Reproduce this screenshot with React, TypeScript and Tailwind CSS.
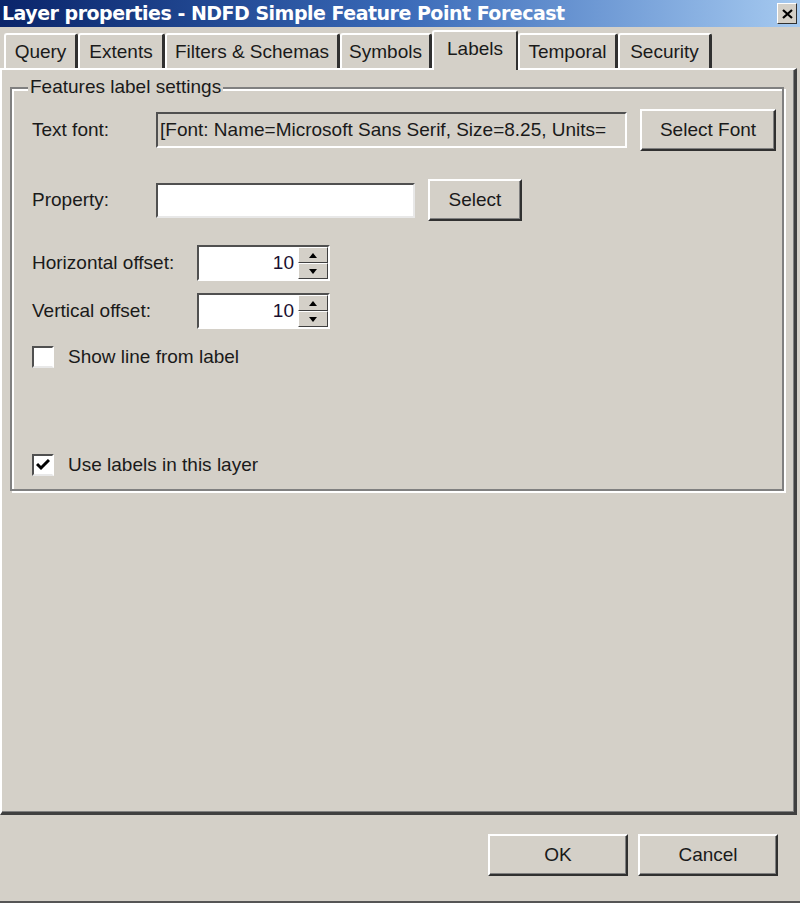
import React from "react"

const tabs = [
  { label: "Query", w: "w-[74px]" },
  { label: "Extents", w: "w-[87px]" },
  { label: "Filters & Schemas", w: "w-[175px]" },
  { label: "Symbols", w: "w-[92px]" },
  { label: "Labels", w: "w-[86px]", active: true },
  { label: "Temporal", w: "w-[100px]" },
  { label: "Security", w: "w-[94px]" },
]

function Button({ label, className }: { label: string; className: string }) {
  return (
    <div
      className={`flex items-center justify-center border-2 border-t-white border-l-white border-r-[#303030] border-b-[#303030] shadow-[inset_-1px_-1px_0_#808080] ${className}`}
    >
      {label}
    </div>
  )
}

function Spinner() {
  return (
    <div className="flex h-[36px] w-[133px] border-2 border-t-[#505050] border-l-[#505050] border-r-white border-b-white bg-white">
      <div className="flex-1 flex items-center justify-end pr-[4px] text-[#1a1030]">10</div>
      <div className="flex flex-col w-[30px]">
        {[0, 1].map((i) => (
          <div
            key={i}
            className="flex-1 flex items-center justify-center bg-[#d4d0c8] border border-t-white border-l-white border-r-[#404040] border-b-[#404040]"
          >
            <svg width="8" height="5" viewBox="0 0 8 5">
              {i === 0 ? <polygon points="4,0 8,5 0,5" fill="#000" /> : <polygon points="0,0 8,0 4,5" fill="#000" />}
            </svg>
          </div>
        ))}
      </div>
    </div>
  )
}

function Checkbox({ checked }: { checked?: boolean }) {
  return (
    <div className="w-[22px] h-[22px] bg-white border-2 border-t-[#505050] border-l-[#505050] border-r-white border-b-[#e8e8e8] flex items-center justify-center">
      {checked && (
        <svg width="14" height="12" viewBox="0 0 14 12">
          <polyline points="1,5 5,9 13,1" fill="none" stroke="#000" strokeWidth="3" />
        </svg>
      )}
    </div>
  )
}

export default function App() {
  return (
    <div className="w-[800px] h-[903px] bg-[#d4d0c8] flex flex-col font-['Liberation_Sans',Arial,sans-serif] text-[19px] text-[#1a1a1a] overflow-hidden">
      {/* Title bar */}
      <div className="h-[27px] flex items-center justify-between pl-[2px] pr-[3px] bg-gradient-to-r from-[#0a246a] via-[#3a6ab8] to-[#a6caf0]">
        <span className="text-white font-bold text-[19px] font-['DejaVu_Sans',sans-serif] tracking-[-0.5px] leading-none">
          Layer properties - NDFD Simple Feature Point Forecast
        </span>
        <div className="w-[20px] h-[21px] bg-[#d4d0c8] border border-t-white border-l-white border-r-[#303030] border-b-[#303030] flex items-center justify-center">
          <svg width="11" height="10" viewBox="0 0 11 10">
            <path d="M1 1 L10 9 M10 1 L1 9" stroke="#000" strokeWidth="2.2" />
          </svg>
        </div>
      </div>

      {/* Tabs */}
      <div className="h-[40px] flex items-end pl-[4px] mt-[1px]">
        {tabs.map((t) => (
          <div
            key={t.label}
            className={
              t.active
                ? `${t.w} h-[40px] -mb-[2px] relative z-10 bg-[#d4d0c8] flex items-center justify-center pb-[3px] border-t-2 border-l-2 border-white border-r-2 border-r-[#303030] rounded-t-[3px]`
                : `${t.w} h-[35px] flex items-center justify-center pt-[2px] border-t-2 border-l-2 border-white border-r-[3px] border-r-[#303030] rounded-t-[3px]`
            }
          >
            {t.label}
          </div>
        ))}
      </div>

      {/* Panel */}
      <div className="w-[797px] h-[747px] border-t-2 border-l-2 border-white border-r-[3px] border-b-[3px] border-r-[#404040] border-b-[#404040] shadow-[inset_-1px_-1px_0_#808080] pt-[17px] pl-[8px]">
        <div className="relative w-[774px] h-[404px] border-2 border-[#808080] shadow-[inset_2px_2px_0_#fff,2px_2px_0_#fff] flex flex-col pl-[20px]">
          <span className="absolute left-[16px] -top-[13px] px-[2px] bg-[#d4d0c8] leading-[22px]">Features label settings</span>

          <div className="flex items-center mt-[20px]">
            <span className="w-[124px]">Text font:</span>
            <div className="w-[471px] h-[36px] border-2 border-t-[#505050] border-l-[#505050] border-r-white border-b-white flex items-center pl-[2px] overflow-hidden whitespace-nowrap">
              [Font: Name=Microsoft Sans Serif, Size=8.25, Units=
            </div>
            <Button label="Select Font" className="ml-[13px] w-[136px] h-[42px]" />
          </div>

          <div className="flex items-center mt-[28px]">
            <span className="w-[124px]">Property:</span>
            <div className="w-[259px] h-[35px] bg-white border-2 border-t-[#505050] border-l-[#505050] border-r-[#e8e8e8] border-b-[#e8e8e8]" />
            <Button label="Select" className="ml-[13px] w-[94px] h-[42px]" />
          </div>

          <div className="flex items-center mt-[24px]">
            <span className="w-[165px]">Horizontal offset:</span>
            <Spinner />
          </div>

          <div className="flex items-center mt-[12px]">
            <span className="w-[165px]">Vertical offset:</span>
            <Spinner />
          </div>

          <div className="flex items-center mt-[14px]">
            <Checkbox />
            <span className="ml-[14px]">Show line from label</span>
          </div>

          <div className="flex items-center mt-[79px]">
            <Checkbox checked />
            <span className="ml-[14px]">Use labels in this layer</span>
          </div>
        </div>
      </div>

      {/* Footer */}
      <div className="flex-1 flex justify-end items-start gap-[10px] pt-[19px] pr-[22px] border-b-2 border-[#555]">
        <Button label="OK" className="w-[140px] h-[42px]" />
        <Button label="Cancel" className="w-[140px] h-[42px]" />
      </div>
    </div>
  )
}
